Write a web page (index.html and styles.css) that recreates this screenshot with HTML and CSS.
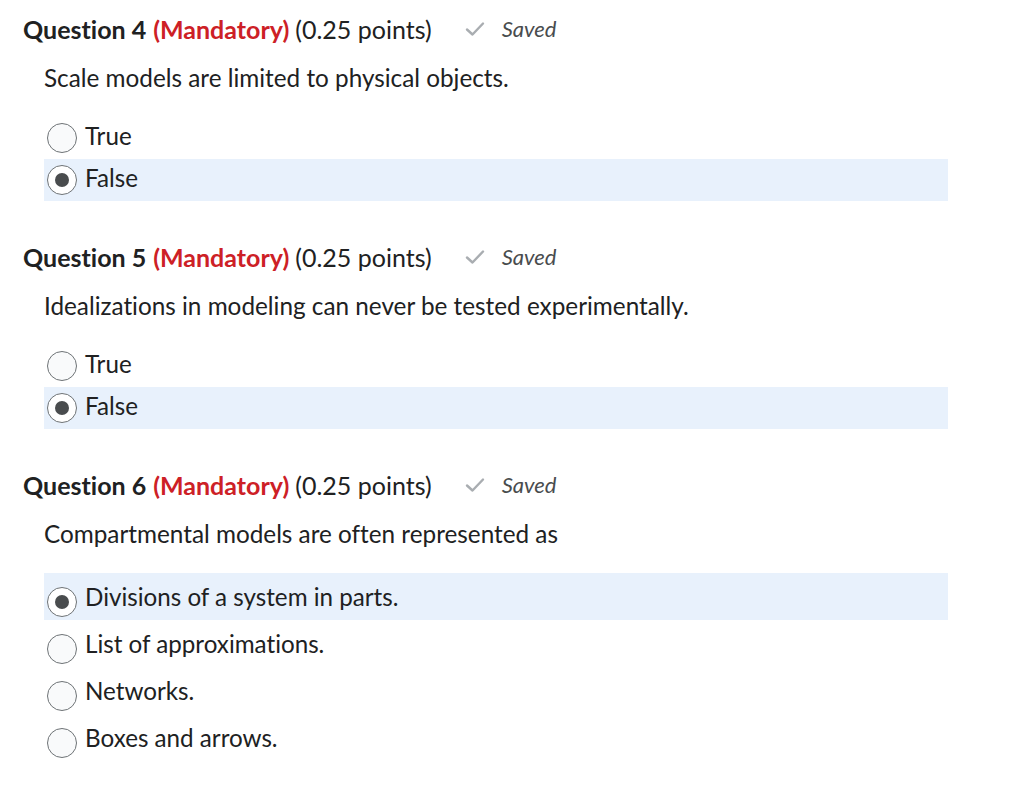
FILE: index.html
```html
<!DOCTYPE html>
<html>
<head>
<meta charset="utf-8">
<link rel="stylesheet" href="styles.css">
</head>
<body>
<div class="page">
  <section class="question">
    <div class="q-header">
      <span class="q-title">Question 4</span>
      <span class="q-mand">(Mandatory)</span>
      <span class="q-points">(0.25 points)</span>
      <span class="saved">
        <svg class="check" viewBox="0 0 20 16" width="20" height="16"><path d="M2 8.5 L7.5 13.5 L18 2.5" fill="none" stroke="#a9adb1" stroke-width="2.4" stroke-linecap="round" stroke-linejoin="round"/></svg>
        <em>Saved</em>
      </span>
    </div>
    <p class="prompt">Scale models are limited to physical objects.</p>
    <div class="options">
      <div class="opt"><span class="radio"></span><span class="label">True</span></div>
      <div class="opt selected"><span class="radio"></span><span class="label">False</span></div>
    </div>
  </section>

  <section class="question">
    <div class="q-header">
      <span class="q-title">Question 5</span>
      <span class="q-mand">(Mandatory)</span>
      <span class="q-points">(0.25 points)</span>
      <span class="saved">
        <svg class="check" viewBox="0 0 20 16" width="20" height="16"><path d="M2 8.5 L7.5 13.5 L18 2.5" fill="none" stroke="#a9adb1" stroke-width="2.4" stroke-linecap="round" stroke-linejoin="round"/></svg>
        <em>Saved</em>
      </span>
    </div>
    <p class="prompt">Idealizations in modeling can never be tested experimentally.</p>
    <div class="options">
      <div class="opt"><span class="radio"></span><span class="label">True</span></div>
      <div class="opt selected"><span class="radio"></span><span class="label">False</span></div>
    </div>
  </section>

  <section class="question">
    <div class="q-header">
      <span class="q-title">Question 6</span>
      <span class="q-mand">(Mandatory)</span>
      <span class="q-points">(0.25 points)</span>
      <span class="saved">
        <svg class="check" viewBox="0 0 20 16" width="20" height="16"><path d="M2 8.5 L7.5 13.5 L18 2.5" fill="none" stroke="#a9adb1" stroke-width="2.4" stroke-linecap="round" stroke-linejoin="round"/></svg>
        <em>Saved</em>
      </span>
    </div>
    <p class="prompt">Compartmental models are often represented as</p>
    <div class="options multi">
      <div class="opt selected"><span class="radio"></span><span class="label">Divisions of a system in parts.</span></div>
      <div class="opt"><span class="radio"></span><span class="label">List of approximations.</span></div>
      <div class="opt"><span class="radio"></span><span class="label">Networks.</span></div>
      <div class="opt"><span class="radio"></span><span class="label">Boxes and arrows.</span></div>
    </div>
  </section>
</div>
</body>
</html>
```

FILE: styles.css
```css
html, body {
  margin: 0;
  padding: 0;
  background: #ffffff;
}
body {
  font-family: Lato, "Open Sans", sans-serif;
  color: #202122;
  font-variant-ligatures: none;
  font-feature-settings: "liga" 0, "clig" 0;
}
.page {
  padding: 13px 0 0 23px;
}
.question {
  margin-bottom: 40px;
}
.q-header {
  display: flex;
  align-items: center;
  height: 32px;
  font-size: 25px;
  line-height: 32px;
  white-space: pre;
}
.q-title {
  font-weight: 700;
}
.q-mand {
  font-weight: 700;
  color: #cd2026;
  margin-left: 7px;
}
.q-points {
  margin-left: 6px;
}
.saved {
  display: flex;
  align-items: center;
  margin-left: 33px;
  color: #494c4e;
  font-size: 22px;
}
.check {
  display: block;
  margin-right: 17px;
}
.saved em {
  font-style: italic;
}
.prompt {
  margin: 18px 0 0 21px;
  font-size: 24.3px;
  line-height: 30px;
}
.options {
  margin: 24px 0 0 21px;
  width: 904px;
}
.opt {
  display: flex;
  align-items: flex-start;
  height: 42px;
  font-size: 24.2px;
}
.opt.selected {
  background: #e8f1fc;
}
.radio {
  box-sizing: border-box;
  width: 30px;
  height: 30px;
  margin: 6px 0 0 3px;
  border: 1px solid #6e7376;
  border-radius: 50%;
  background: #f9fafb;
  flex: none;
  position: relative;
}
.selected .radio {
  border: 1.5px solid #6e7376;
  background: #ffffff;
}
.selected .radio::after {
  content: "";
  position: absolute;
  left: 50%;
  top: 50%;
  width: 14px;
  height: 14px;
  margin: -7px 0 0 -7px;
  border-radius: 50%;
  background: #494c4e;
}
.label {
  margin-left: 8px;
  line-height: 28px;
  padding-top: 5px;
}
.multi .opt {
  height: 47px;
}
.multi .radio {
  margin-top: 14px;
}
.multi .label {
  padding-top: 10px;
}
```
